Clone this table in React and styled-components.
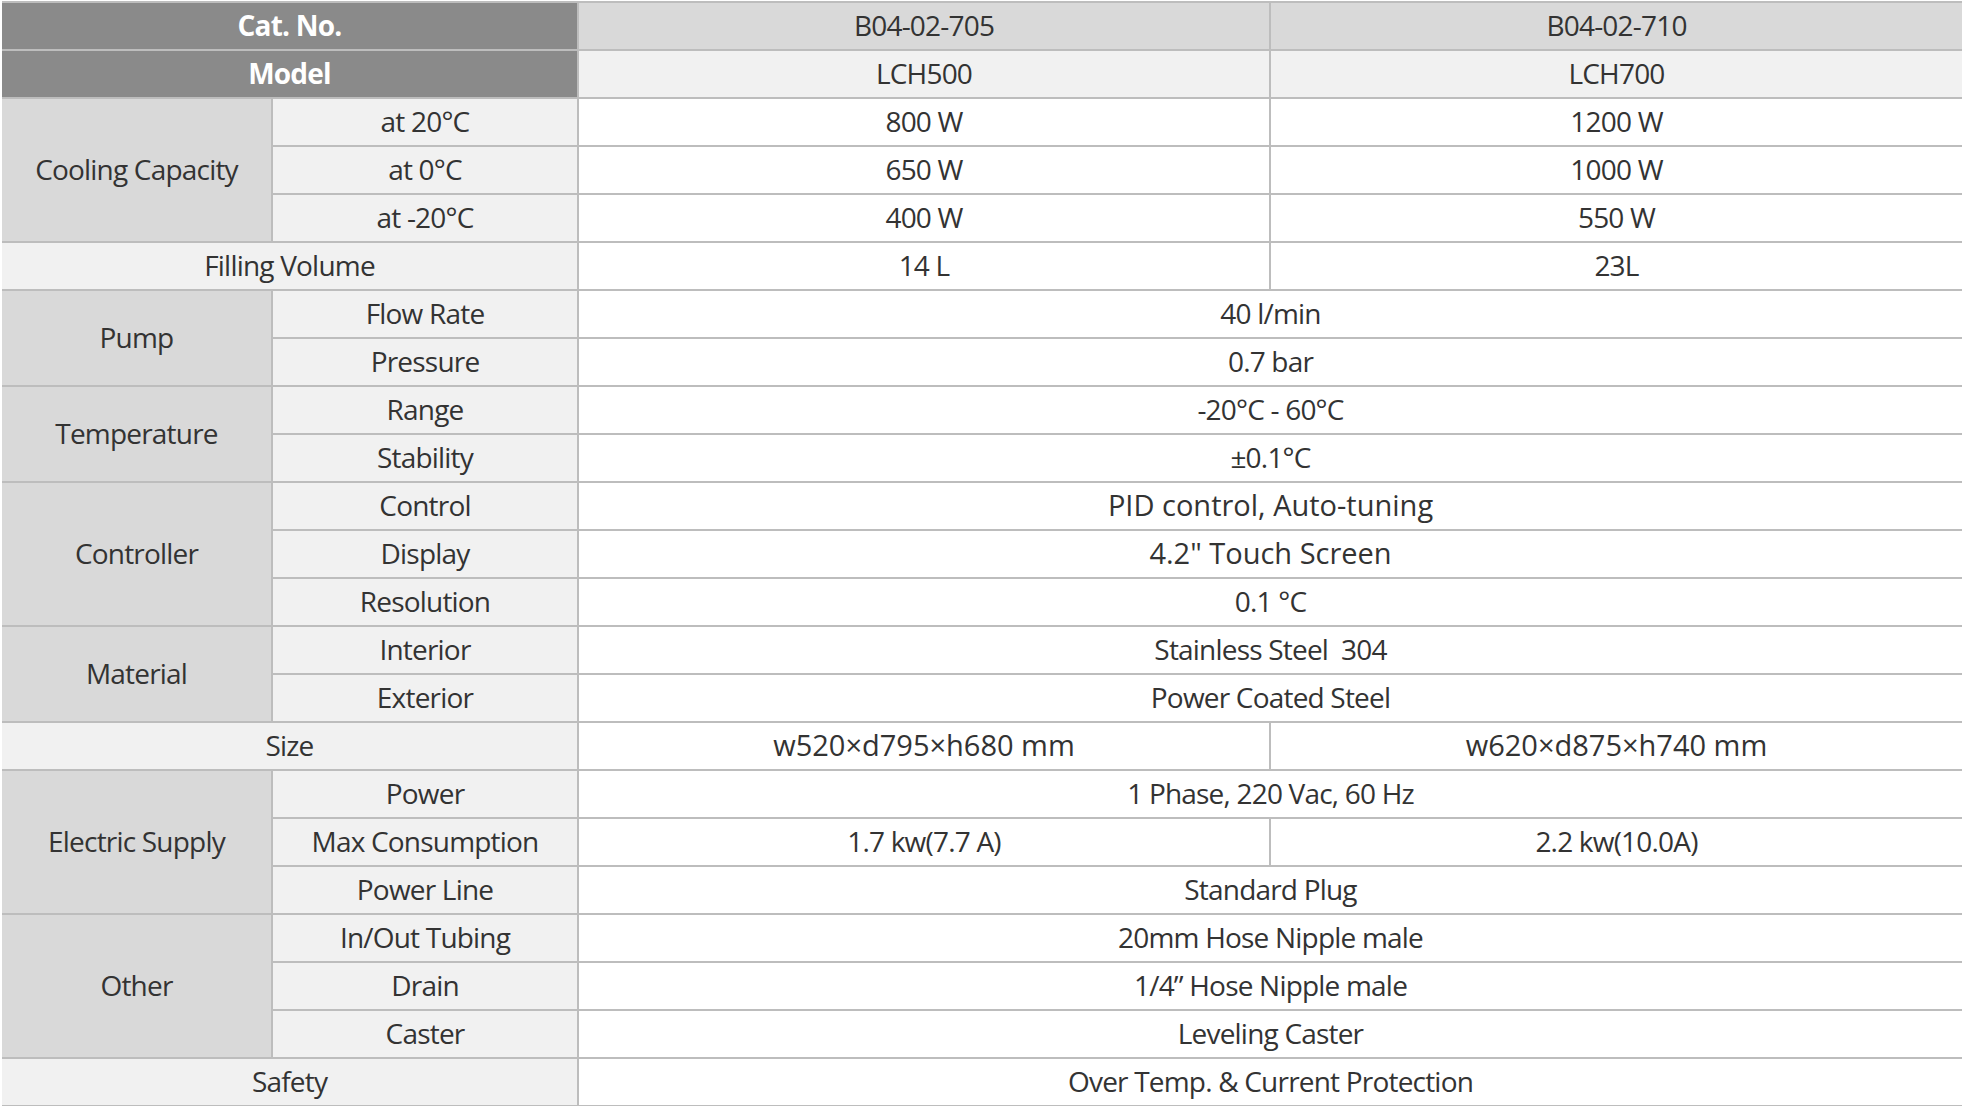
import styled, { createGlobalStyle } from 'styled-components';

const GlobalStyle = createGlobalStyle`
	html, body {
		margin: 0;
		padding: 0;
		background: #ffffff;
	}
	body {
		font-family: 'Open Sans', 'Noto Sans', sans-serif;
		color: #333333;
	}
`;

// one entry per row; group rows carry the rowSpan of their first cell
const rows = [
	{ head: 'Cat. No.', values: ['B04-02-705', 'B04-02-710'], kind: 'cat' },
	{ head: 'Model', values: ['LCH500', 'LCH700'], kind: 'model' },
	{ group: 'Cooling Capacity', span: 3, sub: 'at 20°C', values: ['800 W', '1200 W'] },
	{ sub: 'at 0°C', values: ['650 W', '1000 W'] },
	{ sub: 'at -20°C', values: ['400 W', '550 W'] },
	{ label: 'Filling Volume', values: ['14 L', '23L'] },
	{ group: 'Pump', span: 2, sub: 'Flow Rate', values: ['40 l/min'] },
	{ sub: 'Pressure', values: ['0.7 bar'] },
	{ group: 'Temperature', span: 2, sub: 'Range', values: ['-20°C - 60°C'] },
	{ sub: 'Stability', values: ['±0.1°C'] },
	{ group: 'Controller', span: 3, sub: 'Control', values: ['PID control, Auto-tuning'], wide: true },
	{ sub: 'Display', values: ['4.2" Touch Screen'], wide: true },
	{ sub: 'Resolution', values: ['0.1 °C'] },
	{ group: 'Material', span: 2, sub: 'Interior', values: ['Stainless Steel  304'] },
	{ sub: 'Exterior', values: ['Power Coated Steel'] },
	{ label: 'Size', values: ['w520×d795×h680 mm', 'w620×d875×h740 mm'], wide: true },
	{ group: 'Electric Supply', span: 3, sub: 'Power', values: ['1 Phase, 220 Vac, 60 Hz'] },
	{ sub: 'Max Consumption', values: ['1.7 kw(7.7 A)', '2.2 kw(10.0A)'] },
	{ sub: 'Power Line', values: ['Standard Plug'] },
	{ group: 'Other', span: 3, sub: 'In/Out Tubing', values: ['20mm Hose Nipple male'] },
	{ sub: 'Drain', values: ['1/4” Hose Nipple male'] },
	{ sub: 'Caster', values: ['Leveling Caster'] },
	{ label: 'Safety', values: ['Over Temp. & Current Protection'] },
];

const widths = [270, 306, 692, 692];

function App() {
	return (
		<>
			<GlobalStyle />
			<Page>
				<SpecTable>
					<colgroup>
						{widths.map((w, i) => (
							<Col key={i} $w={w} />
						))}
					</colgroup>
					<tbody>
						{rows.map((row, i) => (
							<tr key={i}>
								{row.head && <HeadCell colSpan={2}>{row.head}</HeadCell>}
								{row.group && <GroupCell rowSpan={row.span}>{row.group}</GroupCell>}
								{row.sub && <SubCell>{row.sub}</SubCell>}
								{row.label && <SubCell colSpan={2}>{row.label}</SubCell>}
								{row.values.map((v, j) => (
									<ValueCell
										key={j}
										colSpan={row.values.length === 1 ? 2 : 1}
										$kind={row.kind}
										$wide={row.wide}
									>
										{v}
									</ValueCell>
								))}
							</tr>
						))}
					</tbody>
				</SpecTable>
			</Page>
		</>
	);
}

const Page = styled.div`
	padding: 1px 0 0 2px;
`;

const Col = styled.col`
	width: ${({ $w }) => $w}px;
`;

const SpecTable = styled.table`
	width: 1960px;
	table-layout: fixed;
	border-collapse: collapse;
	border-top: 2px solid #bdbdbd;

	td {
		height: 43px;
		padding: 0 0 3px;
		border: 2px solid #bdbdbd;
		text-align: center;
		vertical-align: middle;
		font-size: 28px;
		letter-spacing: -0.8px;
		white-space: pre;
	}

	td:first-child {
		border-left: none;
	}
	td:last-child {
		border-right: none;
	}
`;

const HeadCell = styled.td`
	background: #8a8a8a;
	color: #ffffff;
	font-weight: 700;
`;

const GroupCell = styled.td`
	background: #d9d9d9;
`;

const SubCell = styled.td`
	background: #f1f1f1;
`;

const ValueCell = styled.td`
	background: ${({ $kind }) =>
		$kind === 'cat' ? '#d9d9d9' : $kind === 'model' ? '#f1f1f1' : '#ffffff'};
	td& {
		font-size: ${({ $wide }) => ($wide ? '29px' : '28px')};
		letter-spacing: ${({ $wide }) => ($wide ? '0' : '-0.8px')};
	}
`;

export default App;
